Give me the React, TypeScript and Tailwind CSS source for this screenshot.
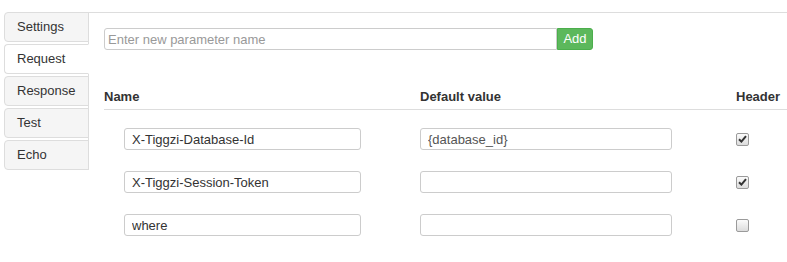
import React from 'react';

const tabs = ['Settings', 'Request', 'Response', 'Test', 'Echo'];

const params = [
  { name: 'X-Tiggzi-Database-Id', value: '{database_id}', header: true },
  { name: 'X-Tiggzi-Session-Token', value: '', header: true },
  { name: 'where', value: '', header: false },
];

function Check({ checked }: { checked: boolean }) {
  return (
    <span className="flex h-[13px] w-[13px] items-center justify-center rounded-[2px] border border-[#9a9a9a] bg-gradient-to-b from-[#fbfbfb] to-[#dcdcdc]">
      {checked && (
        <svg width="9" height="8" viewBox="0 0 9 8">
          <path d="M1 4.2 L3.4 6.6 L8 1.2" fill="none" stroke="#333" strokeWidth="2" />
        </svg>
      )}
    </span>
  );
}

export default function App() {
  return (
    <div className="flex h-[262px] w-[787px] bg-white pl-[4px] pt-[12px] text-[13px] text-[#333] [font-family:'Liberation_Sans',Arial,sans-serif]">
      {/* Left tabs */}
      <div className="flex h-[158px] w-[85px] flex-col gap-[2px] border-r border-[#ddd]">
        {tabs.map((t) => (
          <div
            key={t}
            className={
              t === 'Request'
                ? '-mr-px flex h-[30px] items-center rounded-l-[4px] border border-[#ddd] border-r-white bg-white pl-[12px]'
                : '-mr-px flex h-[30px] items-center rounded-l-[4px] border border-[#ddd] bg-[#f5f5f5] pl-[12px]'
            }
          >
            {t}
          </div>
        ))}
      </div>

      {/* Content */}
      <div className="flex-1 border-t border-[#ddd] pl-[15px] pt-[15px]">
        <div className="flex">
          <input
            placeholder="Enter new parameter name"
            className="h-[22px] w-[453px] rounded-l-[3px] border border-[#ccc] px-[3px] text-[13px] outline-none placeholder:text-[#999]"
          />
          <button className="h-[22px] w-[36px] rounded-r-[3px] border border-[#4cae4c] bg-[#5cb85c] text-[13px] text-white">
            Add
          </button>
        </div>

        <div className="mt-[37px] grid h-[23px] grid-cols-[316px_316px_1fr] border-b border-[#ddd] font-bold leading-[20px]">
          <div>Name</div>
          <div>Default value</div>
          <div>Header</div>
        </div>

        {params.map((p) => (
          <div key={p.name} className="grid h-[43px] grid-cols-[316px_316px_1fr] items-start pt-[18px]">
            <input
              defaultValue={p.name}
              className="ml-[20px] h-[22px] w-[237px] rounded-[3px] border border-[#ccc] px-[7px] text-[13px] text-[#333] outline-none"
            />
            <input
              defaultValue={p.value}
              className="h-[22px] w-[252px] rounded-[3px] border border-[#ccc] px-[7px] text-[13px] text-[#555] outline-none"
            />
            <div className="flex h-[22px] items-center">
              <Check checked={p.header} />
            </div>
          </div>
        ))}
      </div>
    </div>
  );
}
